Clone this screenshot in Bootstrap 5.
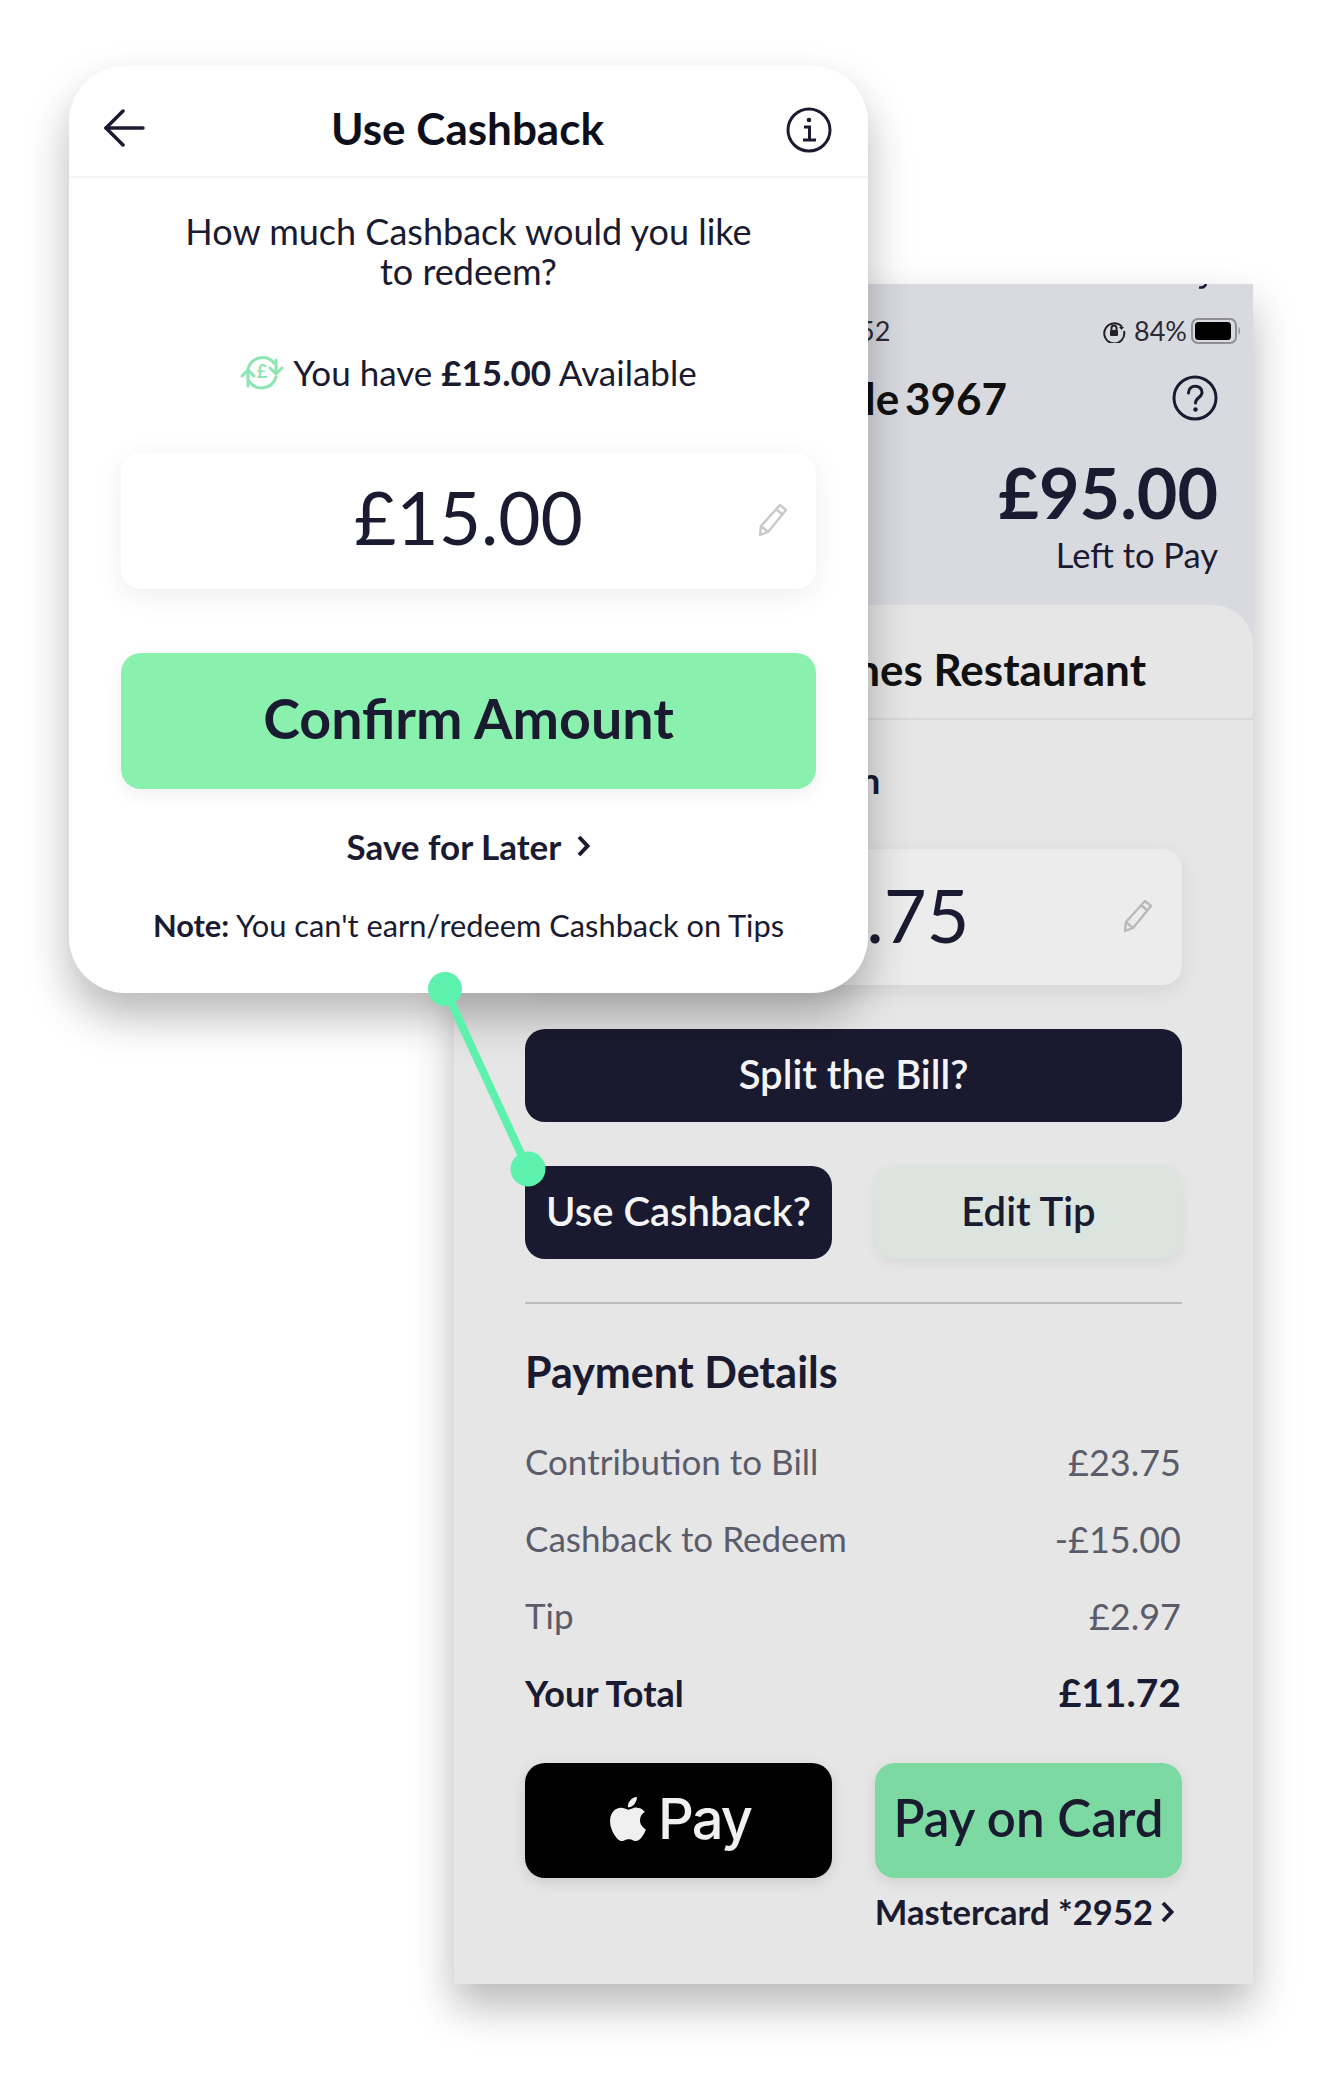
<!DOCTYPE html>
<html lang="en">
<head>
<meta charset="UTF-8">
<title>Use Cashback</title>
<link href="https://cdn.jsdelivr.net/npm/bootstrap@5.3.3/dist/css/bootstrap.min.css" rel="stylesheet">
<style>
    body { background: #fff; font-family: Lato, "Liberation Sans", sans-serif; color: #1a1b30; }
    .stage { position: relative; width: 1322px; height: 2077px; overflow: hidden; }

    /* phone behind */
    .phone { position: absolute; left: 454px; top: 284px; width: 799px; height: 1700px; background: #d9dae0; box-shadow: 0 22px 40px rgba(0,0,0,.28); overflow: hidden; }
    .phone-top { height: 321px; padding: 31px 35px 0 36px; position: relative; }
    .stray { position: absolute; right: 44px; top: 0; }
    .status-row { height: 32px; font-size: 27px; line-height: 32px; color: #2b2b33; padding-left: 331px; margin-right: -23px; }
    .title-row { height: 60px; margin-top: 21px; }
    .title-row h2 { font-size: 44px; font-weight: 700; margin: 0; color: #111; word-spacing: -5px; }
    .help-gap { width: 141px; }
    .left-amount { font-size: 70px; line-height: 70px; font-weight: 700; margin-top: 29px; text-align: right; }
    .left-label { font-size: 34.500px; line-height: 40px; margin-top: 8px; text-align: right; }
    .sheet-body { background: #e6e6e6; border-radius: 40px 40px 0 0; height: 1379px; }
    .sheet-head { height: 115px; border-bottom: 2px solid #d8d8d8; padding: 15px 107px 0 0; font-size: 44px; font-weight: 700; color: #111; }
    .sheet-main { padding: 0 71px; }
    .contrib-title { font-size: 37px; font-weight: 700; line-height: 44px; margin-top: 38px; height: 44px; white-space: nowrap; }
    .contrib-box { height: 136px; margin-top: 47px; background: #ececec; border-radius: 20px; box-shadow: 0 6px 20px rgba(0,0,0,.08); position: relative; font-size: 74px; padding-bottom: 5px; }
    .pen-back { position: absolute; right: 29px; top: 50px; }
    .btn-dark-ink, .btn-dark-ink:hover { background: #191a2f; color: #f4f4f6; border: 0; border-radius: 20px; font-size: 40px; font-weight: 600; height: 93px; padding-bottom: 10px; }
    .btn-tip, .btn-tip:hover { background: #dbe4de; color: #1a1b30; border: 0; border-radius: 20px; font-size: 40px; font-weight: 600; height: 93px; padding-bottom: 10px; box-shadow: 0 4px 12px rgba(0,0,0,.06); }
    .split { width: 100%; margin-top: 44px; }
    .pair { gap: 43px; margin-top: 44px; }
    .pair > * { flex: 1 1 0; padding-left: 0; padding-right: 0; }
    .rule { height: 2px; background: #bdbdbd; margin-top: 43px; }
    .pay-title { font-size: 43px; font-weight: 700; line-height: 50px; margin-top: 43px; }
    .pay-rows { margin-top: 26px; }
    .pay-row { height: 77px; font-size: 35px; color: #5b5c6b; padding-right: 1px; }
    .pay-row span:last-child { font-size: 36px; }
    .pay-row.total { color: #1a1b30; font-weight: 700; }
    .pay-row.total span:first-child { font-size: 36px; }
    .pay-row.total .amt { font-size: 39px; }
    .btn-apple, .btn-apple:hover { background: #000; color: #f0f0f0; height: 115px; border: 0; border-radius: 20px; font-family: Inter, sans-serif; font-size: 56px; font-weight: 500; letter-spacing: -2px; padding-bottom: 10px; box-shadow: 0 4px 14px rgba(0,0,0,.12); }
    .btn-card, .btn-card:hover { background: #7dd9a2; color: #1a1b30; height: 115px; border: 0; border-radius: 20px; font-size: 51px; font-weight: 600; padding-bottom: 10px; box-shadow: 0 4px 14px rgba(0,0,0,.1); white-space: nowrap; }
    .apple-row { margin-top: 32px; gap: 43px; }
    .apple-row > * { flex: 1 1 0; padding-left: 0; padding-right: 0; }
    .master { font-size: 34.600px; font-weight: 700; line-height: 40px; margin-top: 14px; padding-right: 8px; }

    /* front card */
    .cash-card { position: absolute; left: 69px; top: 66px; width: 799px; height: 927px; background: #fff; border-radius: 56px; box-shadow: 0 24px 44px rgba(0,0,0,.28); }
    .cash-head { height: 112px; border-bottom: 2px solid #f3f3f7; padding: 14px 36px 0 34px; }
    .cash-head h1 { font-size: 44px; font-weight: 700; margin: 0 0 0 4px; color: #0e0f1c; }
    .cash-q { font-size: 36px; line-height: 40px; text-align: center; margin-top: 33px; }
    .cash-avail { font-size: 35px; line-height: 44px; margin-top: 59px; gap: 9px; }
    .amount-box { height: 136px; margin: 59px 52px 0; background: #fff; border-radius: 20px; box-shadow: 0 6px 30px rgba(0,0,0,.07); position: relative; font-size: 73px; padding-bottom: 6px; }
    .pen-front { position: absolute; right: 28px; top: 50px; }
    .btn-confirm, .btn-confirm:hover { display: block; height: 136px; margin: 64px 52px 0; width: calc(100% - 104px); background: #8af0ae; color: #1a1b30; border: 0; border-radius: 20px; font-size: 55.500px; font-weight: 700; padding-bottom: 12px; box-shadow: 0 6px 18px rgba(0,0,0,.06); }
    .save-later { font-size: 35px; font-weight: 700; line-height: 40px; margin-top: 37px; gap: 15px; }
    .cash-note { font-size: 30.800px; line-height: 40px; text-align: center; margin-top: 40px; }
    .connector { position: absolute; left: 0; top: 0; }
</style>
</head>
<body>
<div class="stage">

    <div class="phone">
        <div class="phone-top">
            <svg class="stray" width="12" height="5" viewBox="0 0 12 5" fill="none" stroke="#1a1b30" stroke-width="2.500"><path d="M9 0C8 3 6 4 2 3.500"/></svg>
            <div class="status-row d-flex justify-content-between align-items-center">
                <span>11:52</span>
                <span class="d-flex align-items-center">
                    <svg width="24" height="24" viewBox="0 0 24 24" fill="none" stroke="#222" stroke-width="2" class="me-2"><path d="M20 8A10 10 0 1 0 22 12"/><path d="M17 8h5l-2.500 3z" fill="#222" stroke="none"/><rect x="8" y="11" width="8" height="6" rx="1" fill="#222" stroke="none"/><path d="M9.500 11V9a2.500 2.500 0 0 1 5 0v2"/></svg>
                    <span>84%</span>
                    <svg width="50" height="26" viewBox="0 0 50 26" class="ms-1"><rect x="1" y="1" width="44" height="24" rx="6" fill="none" stroke="#8e8e93" stroke-width="2"/><rect x="4" y="4" width="36" height="18" rx="3.500" fill="#000"/><path d="M47.500 9c2 1 2 7 0 8z" fill="#8e8e93"/></svg>
                </span>
            </div>
            <div class="title-row d-flex justify-content-between align-items-center">
                <span class="help-gap"></span>
                <h2>Table 3967</h2>
                <svg width="46" height="46" viewBox="0 0 46 46" fill="none" stroke="#1a1b30" stroke-width="3"><circle cx="23" cy="23" r="21"/><path d="M16.500 18c0-9 13.500-9 13.500-.500 0 5-6.500 5-6.500 10.500" stroke-linecap="round"/><circle cx="23.500" cy="34.500" r="2.200" fill="#1a1b30" stroke="none"/></svg>
            </div>
            <div class="left-amount">£95.00</div>
            <div class="left-label">Left to Pay</div>
        </div>
        <div class="sheet-body">
            <div class="sheet-head d-flex align-items-center justify-content-end">Jones Restaurant</div>
            <div class="sheet-main">
                <div class="contrib-title">Your Bill Contribution</div>
                <div class="contrib-box d-flex align-items-center justify-content-center">
                    £23.75
                    <svg class="pen-back" width="30" height="34" viewBox="0 0 30 34" fill="none" stroke="#b9b9b9" stroke-width="2.400" stroke-linejoin="round"><path d="M22 2l6 5L10 29l-8 3 1-9z"/><path d="M3 23l7 6"/><path d="M18.500 6.500l6 5"/></svg>
                </div>
                <button class="btn btn-dark-ink split" type="button">Split the Bill?</button>
                <div class="d-flex pair">
                    <button class="btn btn-dark-ink" type="button">Use Cashback?</button>
                    <button class="btn btn-tip" type="button">Edit Tip</button>
                </div>
                <div class="rule"></div>
                <div class="pay-title">Payment Details</div>
                <div class="pay-rows">
                    <div class="pay-row d-flex justify-content-between align-items-center"><span>Contribution to Bill</span><span>£23.75</span></div>
                    <div class="pay-row d-flex justify-content-between align-items-center"><span>Cashback to Redeem</span><span>-£15.00</span></div>
                    <div class="pay-row d-flex justify-content-between align-items-center"><span>Tip</span><span>£2.97</span></div>
                    <div class="pay-row total d-flex justify-content-between align-items-center"><span>Your Total</span><span class="amt">£11.72</span></div>
                </div>
                <div class="d-flex apple-row">
                    <button class="btn btn-apple d-flex align-items-center justify-content-center gap-2" type="button">
                        <svg width="44" height="50" viewBox="0 0 16 16" fill="#f0f0f0"><path d="M11.182.008C11.148-.03 9.923.023 8.857 1.18c-1.066 1.156-.902 2.482-.878 2.516.024.034 1.52.087 2.475-1.258.955-1.345.762-2.391.728-2.43zm3.314 11.733c-.048-.096-2.325-1.234-2.113-3.422.212-2.189 1.675-2.789 1.698-2.854.023-.065-.597-.79-1.254-1.157a3.692 3.692 0 0 0-1.563-.434c-.108-.003-.483-.095-1.254.116-.508.139-1.653.589-1.968.607-.316.018-1.256-.522-2.267-.665-.647-.1-1.333.105-1.824.302-.49.197-1.422.759-2.074 2.242-.652 1.483-.311 3.832-.067 4.562.244.73.625 1.924 1.273 2.796.576.984 1.34 1.667 1.659 1.899.319.232 1.219.386 1.843.067.502-.308 1.408-.485 1.766-.472.357.013 1.061.154 1.782.539.571.197 1.111.115 1.652-.105.541-.221 1.324-1.059 2.238-2.758.347-.79.505-1.217.473-1.282z"/></svg>
                        <span>Pay</span>
                    </button>
                    <button class="btn btn-card" type="button">Pay on Card</button>
                </div>
                <div class="master d-flex justify-content-end align-items-center gap-2">
                    <span>Mastercard *2952</span>
                    <svg width="13" height="22" viewBox="0 0 13 22" fill="none" stroke="#1a1b30" stroke-width="4"><path d="M2 2l8.500 9L2 20"/></svg>
                </div>
            </div>
        </div>
    </div>

    <div class="cash-card">
        <div class="cash-head d-flex justify-content-between align-items-center">
            <svg width="42" height="38" viewBox="0 0 42 38" fill="none" stroke="#1a1b30" stroke-width="3.500" stroke-linecap="round" stroke-linejoin="round"><path d="M40 19H3"/><path d="M20 2L3 19l17 17"/></svg>
            <h1>Use Cashback</h1>
            <svg class="mt-1" width="46" height="46" viewBox="0 0 46 46" fill="none" stroke="#1a1b30" stroke-width="3"><circle cx="23" cy="23" r="21"/><circle cx="23" cy="13" r="2.300" fill="#1a1b30" stroke="none"/><path d="M18 20h5.500v13"/><path d="M17 33h13"/></svg>
        </div>
        <div class="cash-q">How much Cashback would you like<br>to redeem?</div>
        <div class="cash-avail d-flex justify-content-center align-items-center">
            <svg width="44" height="36" viewBox="0 0 44 36" fill="none" stroke="#8ce6b0" stroke-width="3" stroke-linecap="round" stroke-linejoin="round">
                <path d="M8 15A15 15 0 0 1 34 9"/><path d="M36 23A15 15 0 0 1 9 27"/>
                <path d="M8 32V17"/><path d="M2 22l6-6 6 6"/><path d="M36 6v13"/><path d="M30 14l6 6 6-6"/>
                <text x="22" y="24" font-size="18" font-weight="700" text-anchor="middle" fill="#8ce6b0" stroke="none" font-family="Lato">£</text>
            </svg>
            <span>You have <strong>£15.00</strong> Available</span>
        </div>
        <div class="amount-box d-flex align-items-center justify-content-center">
            £15.00
            <svg class="pen-front" width="30" height="34" viewBox="0 0 30 34" fill="none" stroke="#c9c9c9" stroke-width="2.400" stroke-linejoin="round"><path d="M22 2l6 5L10 29l-8 3 1-9z"/><path d="M3 23l7 6"/><path d="M18.500 6.500l6 5"/></svg>
        </div>
        <button class="btn btn-confirm" type="button">Confirm Amount</button>
        <div class="save-later d-flex justify-content-center align-items-center">
            <span>Save for Later</span>
            <svg width="14" height="22" viewBox="0 0 14 22" fill="none" stroke="#1a1b30" stroke-width="4"><path d="M3 2l8.500 9L3 20"/></svg>
        </div>
        <div class="cash-note"><strong>Note:</strong> You can't earn/redeem Cashback on Tips</div>
    </div>

    <svg class="connector" width="1322" height="2077" viewBox="0 0 1322 2077">
        <path d="M445 989L528 1169" stroke="#5cf2ae" stroke-width="8"/>
        <circle cx="445" cy="989" r="17" fill="#5cf2ae"/>
        <circle cx="528" cy="1169" r="17.500" fill="#5cf2ae"/>
    </svg>
</div>
<script src="https://cdn.jsdelivr.net/npm/bootstrap@5.3.3/dist/js/bootstrap.bundle.min.js"></script>
</body>
</html>
